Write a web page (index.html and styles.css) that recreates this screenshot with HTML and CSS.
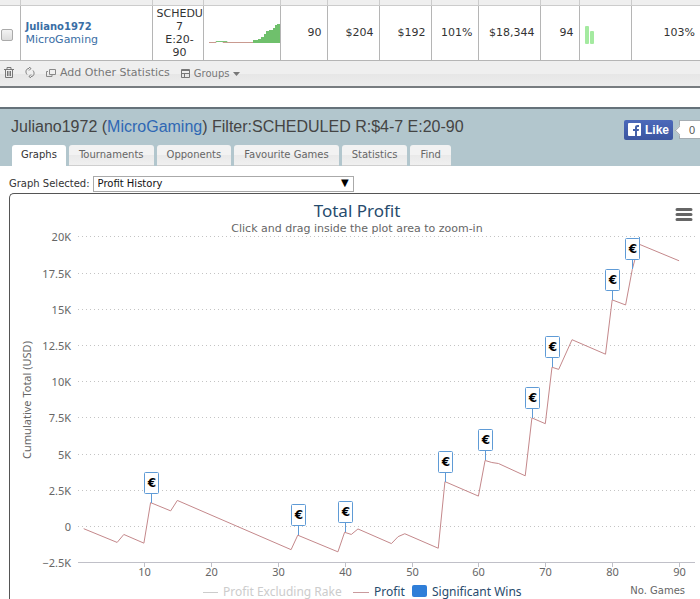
FILE: index.html
```html
<!DOCTYPE html>
<html lang="en">
<head>
    <meta charset="UTF-8">
    <meta name="viewport" content="width=device-width, initial-scale=1.0">
    <title>Juliano1972 - Total Profit</title>
    <link rel="stylesheet" href="styles.css">
</head>
<body>
    <!-- Player statistics -->
    <table class="stats">
        <colgroup>
            <col class="col-check"><col class="col-player"><col class="col-filter"><col class="col-spark">
            <col class="col-small"><col class="col-medium"><col class="col-medium"><col class="col-small">
            <col class="col-large"><col class="col-mini"><col class="col-medium"><col>
        </colgroup>
        <tbody>
            <tr class="strip">
                <td></td><td></td><td></td><td></td><td></td><td></td>
                <td></td><td></td><td></td><td></td><td></td><td></td>
            </tr>
            <tr class="player-row">
                <td class="check"><input type="checkbox" aria-label="Select Juliano1972"></td>
                <td class="player"><a href="#" class="name">Juliano1972</a><br><a href="#">MicroGaming</a></td>
                <td class="filter">SCHEDU<br>7<br>E:20-<br>90</td>
                <td class="spark">
                    <svg width="72" height="22" viewBox="0 0 72 22">
                        <path d="M1 19.500H8V18.500H15V19.500H45" fill="none" stroke="#c99a90"/>
                        <path d="M8 18.500H19V19.500" fill="none" stroke="#7cc47a"/>
                        <path d="M45 20V17H50V16H53V14H56V11H58V8H61V7H65V5H67V2H69V1H72V20Z" fill="#6fc06c"/>
                    </svg>
                </td>
                <td>90</td>
                <td>$204</td>
                <td>$192</td>
                <td>101%</td>
                <td>$18,344</td>
                <td>94</td>
                <td class="bars">
                    <svg width="11" height="18" viewBox="0 0 11 18">
                        <rect width="4" height="18" rx="1" fill="#a4eaa0"/>
                        <rect x="5" y="5" width="4" height="13" rx="1" fill="#a4eaa0"/>
                    </svg>
                </td>
                <td>103%</td>
            </tr>
        </tbody>
    </table>

    <div class="toolbar">
        <button type="button" aria-label="Delete">
            <svg width="10" height="11" viewBox="0 0 10 11" fill="none" stroke="#777">
                <path d="M0 2.500H10M3 2V.5H7V2M1.500 3V10.500H8.500V3M3.500 4V9M5 4V9M6.500 4V9"/>
            </svg>
        </button>
        <button type="button" aria-label="Refresh">
            <svg width="10" height="11" viewBox="0 0 10 11" fill="none" stroke="#777">
                <path d="M6 9.500C9 9.500 10 6 8 3.500M4 1.500C1 1.500 0 5 2 7.500M4 0L6 1.500L4 3.500M6 7.500L4 9.500L6 11"/>
            </svg>
        </button>
        <button type="button" class="add-stats">
            <svg width="10" height="9" viewBox="0 0 10 9" fill="none" stroke="#888">
                <path d="M3.500 1.500H9.500V6.500H3.500ZM2 3.500H.5V8.500H6V7"/>
            </svg>
            Add Other Statistics
        </button>
        <button type="button" class="groups">
            <svg width="9" height="9" viewBox="0 0 9 9" fill="none" stroke="#777">
                <path d="M.5 .5H8.500V8.500H.5ZM0 1.500H9M0 4.500H9M3.500 4V9"/>
            </svg>
            Groups
            <svg class="caret" width="7" height="4" viewBox="0 0 7 4"><path d="M0 0H7L3.500 4Z" fill="#777"/></svg>
        </button>
    </div>

    <!-- Selected player -->
    <header class="player-header">
        <div class="title-row">
            <h1>Juliano1972 (<a href="#">MicroGaming</a>) Filter:SCHEDULED R:$4-7 E:20-90</h1>
            <div class="like-box">
                <button type="button" class="like">
                    <svg width="13" height="13" viewBox="0 0 13 13">
                        <rect width="13" height="13" rx="1" fill="#fff"/>
                        <path d="M7 13V8H5V6H7V4.500C7 2.800 8 2 9.500 2H11V4H10C9.300 4 9 4.300 9 5V6H11L10.700 8H9V13Z" fill="#4460a8"/>
                    </svg>
                    Like
                </button>
                <span class="count">0</span>
            </div>
        </div>
        <nav class="tabs">
            <a href="#" class="tab active">Graphs</a>
            <a href="#" class="tab">Tournaments</a>
            <a href="#" class="tab">Opponents</a>
            <a href="#" class="tab">Favourite Games</a>
            <a href="#" class="tab">Statistics</a>
            <a href="#" class="tab">Find</a>
        </nav>
    </header>

    <main>
        <div class="graph-select">
            <label for="graph">Graph Selected:</label>
            <div class="select-wrap">
                <select id="graph">
                    <option>Profit History</option>
                </select>
            </div>
        </div>

        <div class="chart-panel">
            <svg id="chart" class="chart" viewBox="0 0 690 405" role="img" aria-label="Total Profit">
                <text class="chart-title" x="347" y="23">Total Profit</text>
                <text class="chart-subtitle" x="347" y="38">Click and drag inside the plot area to zoom-in</text>
                <path d="M667 15.500H681M667 20.500H681M667 25.500H681" stroke="#666" stroke-width="3" stroke-linecap="round"/>
                <text class="axis-title" transform="translate(21 206) rotate(-90)">Cumulative Total (USD)</text>
                <g id="plot"></g>
                <text class="games-title" x="675" y="400">No. Games</text>
                <g class="legend">
                    <path d="M193 398.500H208" stroke="#ccc"/>
                    <text class="off" x="213" y="402">Profit Excluding Rake</text>
                    <path d="M343 398.500H359" stroke="#c99a9d"/>
                    <text x="364" y="402">Profit</text>
                    <rect x="402" y="391" width="15" height="12" rx="2" fill="#2f7ed8"/>
                    <text x="422" y="402">Significant Wins</text>
                </g>
            </svg>
        </div>
    </main>

    <script src="chart.js"></script>
</body>
</html>
```
FILE: styles.css
```css
* {
    margin: 0;
    padding: 0;
    box-sizing: border-box;
}

body {
    background-color: #fff;
    font-family: "DejaVu Sans", Verdana, sans-serif;
    font-size: 11px;
    color: #333;
    overflow-x: hidden;
}

a {
    color: #3a6ea5;
    text-decoration: none;
}

button {
    border: none;
    background: none;
    font-family: inherit;
    cursor: pointer;
}

/* Statistics table */
.stats {
    width: 100%;
    table-layout: fixed;
    border-collapse: collapse;
}

.col-check { width: 20px; }
.col-player { width: 132px; }
.col-filter { width: 51px; }
.col-spark { width: 77px; }
.col-small { width: 47px; }
.col-medium { width: 52px; }
.col-large { width: 62px; }
.col-mini { width: 39px; }

.stats td {
    border-right: 1px solid #b5b5b5;
    border-bottom: 1px solid #b5b5b5;
    padding-right: 5px;
    text-align: right;
    line-height: 13px;
}

.stats td:last-child {
    border-right: none;
}

.strip {
    height: 5px;
    background-color: #efefef;
}

.stats .strip td {
    border-color: #ccc;
}

.player-row {
    height: 55px;
}

.stats .check {
    padding: 4px 0 0 1px;
    text-align: left;
}

.check input {
    display: block;
    appearance: none;
    width: 12px;
    height: 12px;
    border: 1px solid #aaa;
    border-radius: 2px;
    background: linear-gradient(#f3f3f3, #dcdcdc);
}

.stats .player {
    padding-left: 5px;
    text-align: left;
}

.name {
    font-size: 10px;
    font-weight: bold;
}

.stats .filter {
    padding: 0 0 0 4px;
    text-align: center;
}

.stats .spark {
    padding: 2px 0 0;
}

.spark svg,
.bars svg {
    display: block;
}

.spark svg {
    margin-left: auto;
}

.stats .bars {
    padding: 4px 0 0 5px;
}

/* Toolbar */
.toolbar {
    display: flex;
    align-items: center;
    gap: 11px;
    height: 27px;
    padding: 0 4px 2px;
    background: linear-gradient(#efefef 50%, #e6e6e6 50%, #ececec);
    border-bottom: 2px solid #777c80;
}

.toolbar button {
    display: flex;
    align-items: center;
    gap: 4px;
    font-size: 11px;
    color: #777;
}

.toolbar .groups {
    padding-top: 3px;
    font-size: 10px;
}

/* Player header */
.player-header {
    margin-top: 19px;
    border-top: 2px solid #65727a;
    background-color: #b2c6cd;
}

.title-row {
    display: flex;
    justify-content: space-between;
    height: 36px;
    padding-left: 11px;
}

h1 {
    padding-top: 9px;
    font-family: "Liberation Sans", Arial, sans-serif;
    font-size: 16px;
    font-weight: normal;
    line-height: 18px;
    color: #444;
}

h1 a {
    color: #2f68b4;
}

.like-box {
    display: flex;
    align-items: flex-start;
    gap: 6px;
    padding-top: 11px;
    font-family: "Liberation Sans", Arial, sans-serif;
}

.like {
    display: flex;
    align-items: center;
    gap: 4px;
    height: 20px;
    padding: 0 4px;
    border-radius: 2px;
    background: linear-gradient(#4c69ba, #3b55a0);
    font-size: 12px;
    font-weight: bold;
    color: #fff;
}

.count {
    position: relative;
    width: 21px;
    height: 19px;
    padding-left: 9px;
    border: 1px solid #a5adb3;
    border-right: none;
    background-color: #fff;
    font-size: 11px;
    line-height: 18px;
    color: #555;
}

.count::before {
    content: "";
    position: absolute;
    left: -4px;
    top: 6px;
    width: 6px;
    height: 6px;
    border-left: 1px solid #a5adb3;
    border-bottom: 1px solid #a5adb3;
    background-color: #fff;
    transform: rotate(45deg);
}

.tabs {
    display: flex;
    gap: 3px;
    padding-left: 12px;
}

.tab {
    padding: 0 10px;
    border-bottom: 1px solid #cfcfcf;
    border-radius: 3px 3px 0 0;
    background: linear-gradient(#f2f2f2 50%, #e9e9e9 50%, #f0f0f0);
    font-size: 10px;
    line-height: 20px;
    color: #666;
}

.tab.active {
    padding: 0 9px;
    border-color: #fff;
    background: #fff;
    color: #333;
}

/* Graph picker */
.graph-select {
    display: flex;
    align-items: center;
    gap: 3px;
    padding: 10px 9px 1px;
    font-size: 10px;
}

.select-wrap {
    position: relative;
    flex: 0 1 261px;
}

.select-wrap::after {
    content: "▼";
    position: absolute;
    right: 5px;
    top: 1px;
    color: #000;
    pointer-events: none;
}

.graph-select select {
    display: block;
    appearance: none;
    width: 100%;
    height: 16px;
    padding-left: 4px;
    border: 1px solid #aaa;
    border-radius: 0;
    background-color: #fff;
    font-family: inherit;
    font-size: 10px;
    color: #111;
}

/* Chart */
.chart-panel {
    margin-left: 9px;
    border: 1px solid #555;
    border-width: 1px 0 0 1px;
    border-radius: 5px 0 0 0;
}

.chart {
    display: block;
    width: 100%;
    font-family: "Noto Sans", "Lucida Grande", sans-serif;
    font-size: 11px;
    fill: #666;
}

.chart text {
    stroke: none;
}

.chart-title {
    font-size: 17px;
    fill: #274b6d;
    text-anchor: middle;
}

.chart-subtitle {
    font-family: "DejaVu Sans", Verdana, sans-serif;
    font-size: 11px;
    text-anchor: middle;
}

.axis-title {
    font-size: 11px;
    text-anchor: middle;
}

.games-title {
    font-family: "DejaVu Sans", Verdana, sans-serif;
    font-size: 10px;
    text-anchor: end;
}

.grid-line {
    stroke: #c4c4c4;
    stroke-dasharray: 1 3;
}

.axis-line {
    stroke: #c0c0c8;
}

.y-label {
    text-anchor: end;
}

.x-label {
    text-anchor: middle;
}

.profit-line {
    fill: none;
    stroke: #c4888b;
}

.flag {
    fill: #fff;
    stroke: #5f9bd6;
}

.flag-text {
    font-family: "DejaVu Sans", sans-serif;
    font-size: 12px;
    font-weight: bold;
    fill: #000;
    text-anchor: middle;
}

.legend {
    font-size: 12px;
    fill: #274b6d;
}

.legend .off {
    fill: #ccc;
}
```
FILE: chart.js
```js
// [game number, cumulative profit in thousands]
const profit = [
    [1, -0.15], [6, -1.1], [7, -0.55], [10, -1.15], [11, 1.65], [14, 1.08],
    [15, 1.8], [32, -1.6], [33, -0.6], [39, -1.75], [40, -0.4], [41, -0.55],
    [42, -0.17], [47, -1.18], [48, -0.7], [49, -0.5], [54, -1.5], [55, 3.1],
    [60, 2.1], [61, 4.56], [62, 4.42], [63, 4.35], [67, 3.5], [68, 7.5],
    [70, 7.1], [71, 11], [72, 10.85], [74, 12.9], [79, 11.9], [80, 15.65],
    [82, 15.3], [83, 17.75], [84, 19.5], [90, 18.35]
];
const wins = [11, 33, 40, 55, 61, 68, 71, 80, 83];

const left = 68;
const right = 685;
const x = game => 67 + game * 6.69;
const y = value => 332.5 - value * 14.48;

let html = '';

// Grid and y labels
for (let value = -2.5; value <= 20; value += 2.5) {
    const lineY = Math.floor(y(value)) + 0.5;
    const label = value === 0 ? '0' : String(value).replace('-', '−') + 'K';
    const type = value === -2.5 ? 'axis-line' : 'grid-line';
    html += `<path class="${type}" d="M${left} ${lineY}H${right}"/>`;
    html += `<text class="y-label" x="61" y="${lineY + 4}">${label}</text>`;
}

// Games axis
for (let game = 10; game <= 90; game += 10) {
    const tickX = Math.round(x(game)) + 0.5;
    html += `<path class="axis-line" d="M${tickX} 369V373"/>`;
    html += `<text class="x-label" x="${tickX}" y="382">${game}</text>`;
}

const points = profit.map(([game, value]) => `${x(game)},${y(value)}`).join(' ');
html += `<polyline class="profit-line" points="${points}"/>`;

// Significant wins
wins.forEach(game => {
    const value = profit.find(point => point[0] === game)[1];
    const flagX = Math.round(x(game)) + 1;
    const flagY = Math.round(y(value));
    html += `<path class="flag" d="M${flagX - 0.5} ${flagY}V${flagY - 10}"/>`;
    html += `<rect class="flag" x="${flagX - 7.5}" y="${flagY - 30.5}" width="14" height="21" rx="1"/>`;
    html += `<text class="flag-text" x="${flagX}" y="${flagY - 16}">€</text>`;
});

// Stem of the win at the top edge of the plot
html += `<path class="flag" d="M${Math.round(x(84)) + 0.5} 43V50"/>`;

document.getElementById('plot').innerHTML = html;
```
